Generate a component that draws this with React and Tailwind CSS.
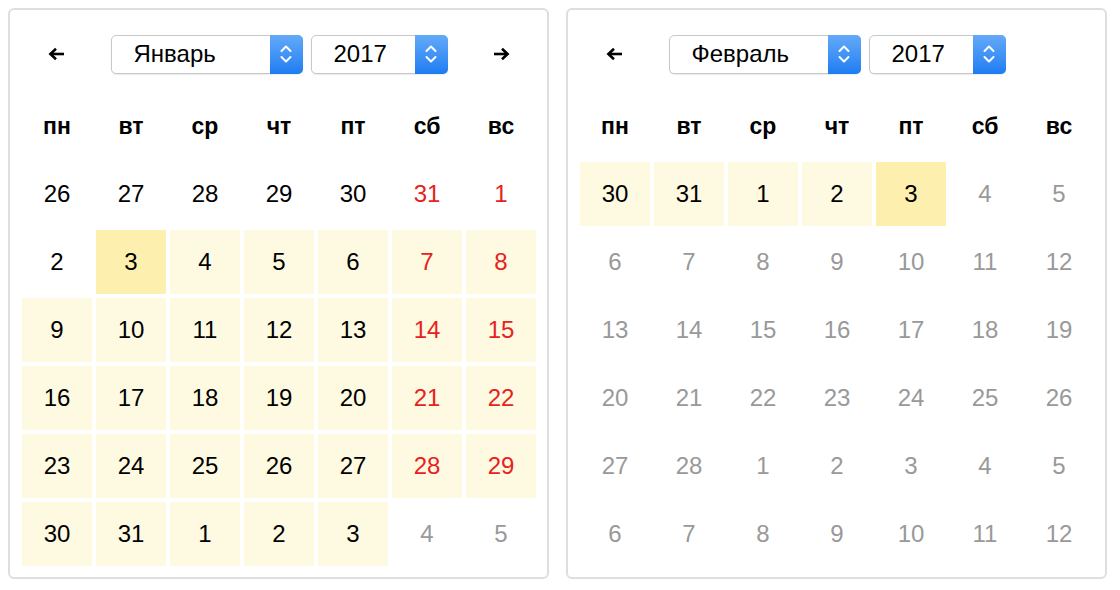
import React from 'react'

const WEEKDAYS = ['пн', 'вт', 'ср', 'чт', 'пт', 'сб', 'вс']

// tone: n = black, r = red, g = grey; bg: '' none, 'l' light range, 'd' selected
const jan = [
  [[26, 'n'], [27, 'n'], [28, 'n'], [29, 'n'], [30, 'n'], [31, 'r'], [1, 'r']],
  [[2, 'n'], [3, 'n', 'd'], [4, 'n', 'l'], [5, 'n', 'l'], [6, 'n', 'l'], [7, 'r', 'l'], [8, 'r', 'l']],
  [[9, 'n', 'l'], [10, 'n', 'l'], [11, 'n', 'l'], [12, 'n', 'l'], [13, 'n', 'l'], [14, 'r', 'l'], [15, 'r', 'l']],
  [[16, 'n', 'l'], [17, 'n', 'l'], [18, 'n', 'l'], [19, 'n', 'l'], [20, 'n', 'l'], [21, 'r', 'l'], [22, 'r', 'l']],
  [[23, 'n', 'l'], [24, 'n', 'l'], [25, 'n', 'l'], [26, 'n', 'l'], [27, 'n', 'l'], [28, 'r', 'l'], [29, 'r', 'l']],
  [[30, 'n', 'l'], [31, 'n', 'l'], [1, 'n', 'l'], [2, 'n', 'l'], [3, 'n', 'l'], [4, 'g'], [5, 'g']],
]

const grey = (nums) => nums.map((n) => [n, 'g'])

const feb = [
  [[30, 'n', 'l'], [31, 'n', 'l'], [1, 'n', 'l'], [2, 'n', 'l'], [3, 'n', 'd'], [4, 'g'], [5, 'g']],
  grey([6, 7, 8, 9, 10, 11, 12]),
  grey([13, 14, 15, 16, 17, 18, 19]),
  grey([20, 21, 22, 23, 24, 25, 26]),
  grey([27, 28, 1, 2, 3, 4, 5]),
  grey([6, 7, 8, 9, 10, 11, 12]),
]

const toneClass = {
  n: 'text-black',
  r: 'text-[#e8211c]',
  g: 'text-[#999999]',
}

const bgClass = {
  l: 'bg-[#fefae2]',
  d: 'bg-[#fdefae]',
}

function Arrow({ dir }) {
  return (
    <svg width="18" height="14" viewBox="0 0 18 14" className={dir === 'right' ? 'rotate-180' : ''}>
      <path d="M16 7H4" stroke="#000" strokeWidth="2.6" fill="none" />
      <path d="M8 1.8L2.4 7L8 12.2" stroke="#000" strokeWidth="2.6" fill="none" strokeLinejoin="miter" />
    </svg>
  )
}

function Select({ value, width }) {
  return (
    <div
      className={`flex h-[39px] items-stretch rounded-[5px] border border-[#c8c8c8] bg-white shadow-[0_1px_1px_rgba(0,0,0,0.08)] ${width}`}
    >
      <div className="flex flex-1 items-center pl-[22px] text-[24px] text-black">{value}</div>
      <div className="-my-px -mr-px flex w-[33px] items-center justify-center rounded-r-[5px] bg-gradient-to-b from-[#63aaf8] to-[#1b7cf2]">
        <svg width="14" height="24" viewBox="0 0 14 24">
          <path d="M2.5 9L7 4.5L11.5 9" stroke="#fff" strokeWidth="2" fill="none" strokeLinecap="round" strokeLinejoin="round" />
          <path d="M2.5 15L7 19.5L11.5 15" stroke="#fff" strokeWidth="2" fill="none" strokeLinecap="round" strokeLinejoin="round" />
        </svg>
      </div>
    </div>
  )
}

function Calendar({ month, rows, showNext }) {
  return (
    <div className="w-[541px] rounded-[6px] border-2 border-[#dedede] bg-white pl-[12px] pr-[11px] pt-[24px] pb-[11px]">
      <div className="flex h-[40px] items-center">
        <div className="flex w-[74px] justify-center pr-[4px]">
          <Arrow dir="left" />
        </div>
        <div className="flex flex-1 justify-center gap-[8px]">
          <Select value={month} width="w-[192px]" />
          <Select value="2017" width="w-[137px]" />
        </div>
        <div className="flex w-[74px] justify-center pl-[4px]">
          {showNext ? <Arrow dir="right" /> : <div className="w-[18px]" />}
        </div>
      </div>
      <div className="mt-[20px] grid h-[64px] grid-cols-7 gap-[4px]">
        {WEEKDAYS.map((d) => (
          <div key={d} className="flex items-center justify-center text-[23px] font-bold text-black">
            {d}
          </div>
        ))}
      </div>
      <div className="mt-[4px] grid grid-cols-7 gap-[4px]">
        {rows.flat().map(([n, tone, bg], i) => (
          <div
            key={i}
            className={`flex h-[64px] items-center justify-center text-[24px] ${toneClass[tone]} ${bg ? bgClass[bg] : ''}`}
          >
            {n}
          </div>
        ))}
      </div>
    </div>
  )
}

export default function App() {
  return (
    <div className="flex h-[590px] w-[1120px] items-start gap-[17px] bg-white pl-[8px] pt-[8px] font-['Liberation_Sans',Arial,sans-serif]">
      <Calendar month="Январь" rows={jan} showNext />
      <Calendar month="Февраль" rows={feb} />
    </div>
  )
}
